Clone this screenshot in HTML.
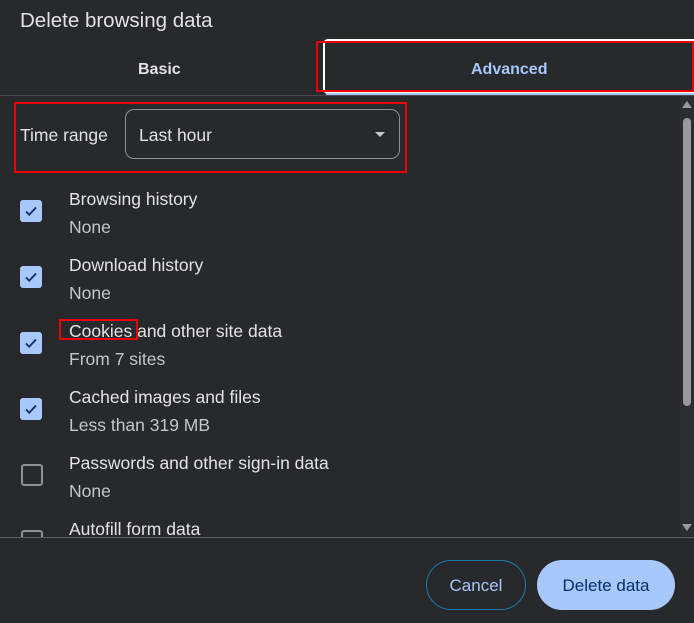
<!DOCTYPE html>
<html><head><style>
body{margin:0;width:694px;height:623px;background:#28292d;font-family:"Liberation Sans",sans-serif;color:#e3e3e3;position:relative;overflow:hidden}
.a{position:absolute}
.t{font-size:17.5px;color:#e3e3e3}
.s{font-size:17.5px;color:#c4c7c5}
.cb{position:absolute;left:20px;width:22px;height:22px;border-radius:3px;background:#a8c7fa}
.cb svg{position:absolute;left:3px;top:3px}
.ub{position:absolute;left:21px;width:18px;height:18px;border:2px solid #8e918f;border-radius:3px}
</style></head><body>
<div class="a" style="left:20px;top:9px;font-size:20.5px;color:#e3e3e3">Delete browsing data</div>
<div class="a" style="left:138px;top:61px;font-size:16px;font-weight:bold;color:#e3e3e3">Basic</div>
<div class="a" style="left:323px;top:39px;width:380px;height:55px;border:2px solid #fff;border-radius:5px;box-sizing:border-box"></div>
<div class="a" style="left:316px;top:41px;width:378px;height:51px;border:2px solid #e00;box-sizing:border-box"></div>
<div class="a" style="left:471px;top:61px;font-size:16px;font-weight:bold;color:#a8c7fa">Advanced</div>
<div class="a" style="left:326px;top:93px;width:368px;height:2px;background:#a8c7fa"></div>
<div class="a" style="left:0;top:95px;width:694px;height:1px;background:#47484c"></div>
<div class="a" style="left:14px;top:102px;width:393px;height:71px;border:2px solid #e00;box-sizing:border-box"></div>
<div class="a t" style="left:20px;top:125px">Time range</div>
<div class="a" style="left:125px;top:109px;width:275px;height:50px;border:1px solid #8e918f;border-radius:9px;box-sizing:border-box"></div>
<div class="a t" style="left:139px;top:125px">Last hour</div>
<div class="a" style="left:375px;top:132px;width:0;height:0;border-left:5px solid transparent;border-right:5px solid transparent;border-top:5px solid #c4c7c5"></div>

<div class="a t" style="left:69px;top:189px">Browsing history</div><div class="a s" style="left:69px;top:217px">None</div>
<div class="cb" style="top:200px"><svg width="16" height="16"><path d="M3 8.5l3.2 3.2L13 4.5" stroke="#062e6f" stroke-width="1.8" fill="none"/></svg></div>
<div class="a t" style="left:69px;top:255px">Download history</div><div class="a s" style="left:69px;top:283px">None</div>
<div class="cb" style="top:266px"><svg width="16" height="16"><path d="M3 8.5l3.2 3.2L13 4.5" stroke="#062e6f" stroke-width="1.8" fill="none"/></svg></div>
<div class="a t" style="left:69px;top:321px">Cookies and other site data</div><div class="a s" style="left:69px;top:349px">From 7 sites</div>
<div class="a" style="left:59px;top:319px;width:79px;height:21px;border:2px solid #e00;box-sizing:border-box"></div>
<div class="cb" style="top:332px"><svg width="16" height="16"><path d="M3 8.5l3.2 3.2L13 4.5" stroke="#062e6f" stroke-width="1.8" fill="none"/></svg></div>
<div class="a t" style="left:69px;top:387px">Cached images and files</div><div class="a s" style="left:69px;top:415px">Less than 319 MB</div>
<div class="cb" style="top:398px"><svg width="16" height="16"><path d="M3 8.5l3.2 3.2L13 4.5" stroke="#062e6f" stroke-width="1.8" fill="none"/></svg></div>
<div class="a t" style="left:69px;top:453px">Passwords and other sign-in data</div><div class="a s" style="left:69px;top:481px">None</div>
<div class="ub" style="top:464px"></div>
<div class="a t" style="left:69px;top:519px">Autofill form data</div>
<div class="ub" style="top:530px;height:5px;border-bottom:none;border-radius:3px 3px 0 0"></div>

<div class="a" style="left:680px;top:96px;width:14px;height:440px;background:#2c2d31"></div>
<div class="a" style="left:682px;top:101px;border-left:5px solid transparent;border-right:5px solid transparent;border-bottom:7px solid #9a9a9a"></div>
<div class="a" style="left:683px;top:118px;width:8px;height:288px;border-radius:4px;background:#9a9a9a"></div>
<div class="a" style="left:682px;top:524px;border-left:5px solid transparent;border-right:5px solid transparent;border-top:7px solid #9a9a9a"></div>
<div class="a" style="left:0;top:537px;width:694px;height:1px;background:#5f6064"></div>

<div class="a" style="left:426px;top:560px;width:100px;height:50px;border:1px solid #1a7ea8;border-radius:25px;box-sizing:border-box;text-align:center;line-height:50px;font-size:17px;color:#a8c7fa">Cancel</div>
<div class="a" style="left:537px;top:560px;width:138px;height:50px;background:#a8c7fa;border-radius:25px;text-align:center;line-height:52px;font-size:17px;color:#062e6f">Delete data</div>
</body></html>
